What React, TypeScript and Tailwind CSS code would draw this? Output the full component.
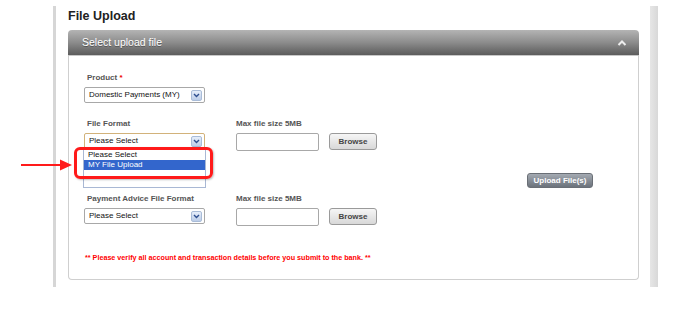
import React from "react"

function SelectArrow() {
  return (
    <span className="flex h-[11px] w-[11px] items-center justify-center rounded-[2px] border border-[#a9bcd8] bg-gradient-to-b from-[#e6eefa] to-[#bccde8]">
      <svg width="7" height="5" viewBox="0 0 7 5">
        <path d="M1 1 L3.5 3.5 L6 1" fill="none" stroke="#2f4f8f" strokeWidth="1.4" />
      </svg>
    </span>
  )
}

function FakeSelect({ value, focused = false }: { value: string; focused?: boolean }) {
  return (
    <div
      className={`flex h-[16px] w-[121px] items-center justify-between rounded-[2px] border bg-white pl-[4px] pr-[2px] text-[8px] whitespace-nowrap text-[#111] ${
        focused ? "border-[#d2b27a]" : "border-[#a8a8a8]"
      }`}
    >
      <span>{value}</span>
      <SelectArrow />
    </div>
  )
}

function Label({ children, flush = false }: { children: React.ReactNode; flush?: boolean }) {
  return (
    <div className={`h-[12px] text-[8px] font-bold leading-[12px] text-[#555] ${flush ? "" : "ml-[3px]"}`}>
      {children}
    </div>
  )
}

function BrowseButton() {
  return (
    <button className="h-[17px] w-[48px] rounded-[3px] border border-[#9a9a9a] bg-gradient-to-b from-[#f6f6f6] to-[#d8d8d8] text-[8px] font-bold text-[#444]">
      Browse
    </button>
  )
}

function FileColumn() {
  return (
    <div className="ml-[31px]">
      <Label flush>Max file size 5MB</Label>
      <div className="mt-[3px] flex items-start gap-[10px]">
        <div className="h-[18px] w-[83px] rounded-[2px] border border-[#a8a8a8] bg-white" />
        <BrowseButton />
      </div>
    </div>
  )
}

export default function App() {
  return (
    <div className="relative h-[310px] w-[688px] overflow-hidden bg-white font-['Liberation_Sans',Arial,sans-serif]">
      <div className="ml-[53px] mt-[6px] flex h-[281px] w-[605px]">
        <div className="w-[3px] bg-[#d6d6d6]" />

        <div className="flex-1 pl-[12px] pr-[11px]">
          <h1 className="mt-[2px] h-[16px] text-[12.5px] font-bold leading-[16px] text-[#222]">File Upload</h1>

          {/* Panel */}
          <div className="mt-[6px]">
            <div className="flex h-[26px] items-center justify-between rounded-t-[4px] border-b border-[#c8c8c8] bg-gradient-to-b from-[#b4b4b4] via-[#8c8c8c] to-[#5c5c5c] pl-[14px] pr-[12px]">
              <span className="text-[10.5px] text-white [text-shadow:0_1px_0_rgba(0,0,0,0.35)]">Select upload file</span>
              <svg width="10" height="6" viewBox="0 0 10 6">
                <path d="M1.5 5 L5 1.5 L8.5 5" fill="none" stroke="#eeeeee" strokeWidth="2" />
              </svg>
            </div>

            <div className="h-[224px] rounded-b-[4px] border-x border-b border-[#cfcfcf] pl-[15px] pr-[45px] pt-[16px]">
              {/* Product */}
              <Label>
                Product <span className="text-[#e00]">*</span>
              </Label>
              <div className="mt-[3px]">
                <FakeSelect value="Domestic Payments (MY)" />
              </div>

              {/* File format */}
              <div className="mt-[15px] flex">
                <div className="relative">
                  <Label>File Format</Label>
                  <div className="relative mt-[3px]">
                    <FakeSelect value="Please Select" focused />
                    {/* open list */}
                    <div className="absolute left-[-1px] right-[-1px] top-full z-10 h-[39px] border border-[#a9b8d4] bg-white text-[8px] leading-[10px] text-[#111]">
                      <div className="pl-[4px]">Please Select</div>
                      <div className="bg-[#3366cc] pl-[4px] text-white">MY File Upload</div>
                    </div>
                    {/* annotation */}
                    <div className="absolute left-[-10px] top-[14px] z-20 h-[32px] w-[139px] rounded-[6px] border-[3px] border-[#ff1a1a] shadow-[1px_1px_2px_rgba(0,0,0,0.25)]" />
                    <svg
                      className="absolute left-[-63px] top-[26px] z-20"
                      width="52"
                      height="12"
                      viewBox="0 0 52 12"
                    >
                      <line x1="0" y1="6" x2="40" y2="6" stroke="#ff1a1a" strokeWidth="2" />
                      <polygon points="39,0.5 51,6 39,11.5" fill="#ff1a1a" />
                    </svg>
                  </div>
                </div>
                <FileColumn />
              </div>

              {/* Upload */}
              <div className="mt-[22px] flex justify-end">
                <button className="h-[15px] w-[66px] rounded-[3px] border border-[#6a6f76] bg-gradient-to-b from-[#a4aab2] to-[#6c737c] text-[8px] font-bold text-white">
                  Upload File(s)
                </button>
              </div>

              {/* Payment advice */}
              <div className="mt-[5px] flex">
                <div>
                  <Label>Payment Advice File Format</Label>
                  <div className="mt-[3px]">
                    <FakeSelect value="Please Select" />
                  </div>
                </div>
                <FileColumn />
              </div>

              <p className="ml-[1px] mt-[27px] text-[7.2px] font-bold leading-[10px] text-[#ff0000]">
                ** Please verify all account and transaction details before you submit to the bank. **
              </p>
            </div>
          </div>
        </div>

        <div className="w-[8px] bg-gradient-to-r from-[#e6e6e6] to-[#d8d8d8]" />
      </div>
    </div>
  )
}
